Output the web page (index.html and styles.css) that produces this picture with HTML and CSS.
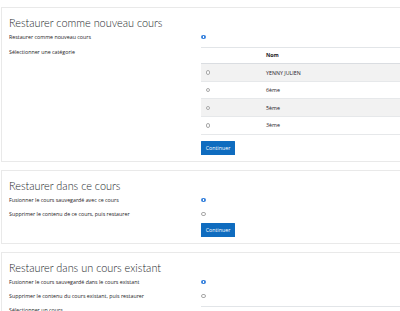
FILE: index.html
```html
<!DOCTYPE html>
<html lang="fr">
<head>
<meta charset="utf-8">
<title>Restauration</title>
<link rel="stylesheet" href="styles.css">
</head>
<body>
<div class="page">
  <section class="card">
    <h2 class="title">Restaurer comme nouveau cours</h2>
    <div class="row">
      <span class="label">Restaurer comme nouveau cours</span>
      <span class="ctrl"><span class="radio checked"></span></span>
    </div>
    <div class="row row-table">
      <span class="label label-tab">Sélectionner une catégorie</span>
      <div class="ctrl">
        <div class="table">
          <div class="tr th"><span class="c1"></span><span class="c2">Nom</span></div>
          <div class="tr odd"><span class="c1"><span class="radio"></span></span><span class="c2">YENNY JULIEN</span></div>
          <div class="tr"><span class="c1"><span class="radio"></span></span><span class="c2">6ème</span></div>
          <div class="tr odd"><span class="c1"><span class="radio"></span></span><span class="c2">5ème</span></div>
          <div class="tr"><span class="c1"><span class="radio"></span></span><span class="c2">3ème</span></div>
        </div>
      </div>
    </div>
    <div class="row row-btn">
      <span class="label"></span>
      <span class="ctrl"><button class="btn">Continuer</button></span>
    </div>
  </section>

  <section class="card">
    <h2 class="title">Restaurer dans ce cours</h2>
    <div class="row">
      <span class="label">Fusionner le cours sauvegardé avec ce cours</span>
      <span class="ctrl"><span class="radio checked"></span></span>
    </div>
    <div class="row">
      <span class="label">Supprimer le contenu de ce cours, puis restaurer</span>
      <span class="ctrl"><span class="radio"></span></span>
    </div>
    <div class="row row-btn2">
      <span class="label"></span>
      <span class="ctrl"><button class="btn">Continuer</button></span>
    </div>
  </section>

  <section class="card">
    <h2 class="title">Restaurer dans un cours existant</h2>
    <div class="row">
      <span class="label">Fusionner le cours sauvegardé dans le cours existant</span>
      <span class="ctrl"><span class="radio checked"></span></span>
    </div>
    <div class="row">
      <span class="label">Supprimer le contenu du cours existant, puis restaurer</span>
      <span class="ctrl"><span class="radio"></span></span>
    </div>
    <div class="row">
      <span class="label">Sélectionner un cours</span>
      <span class="ctrl ctrl-line"></span>
    </div>
  </section>
</div>
</body>
</html>
```

FILE: styles.css
```css
html, body {
  margin: 0;
  padding: 0;
  overflow: hidden;
  background: #ffffff;
}
body {
  font-family: "Open Sans", "Liberation Sans", sans-serif;
  color: #1d2125;
  font-size: 5.3px;
}
.page {
  padding: 7px 0 0 1px;
  width: 430px;
}
.card {
  border: 1px solid #e9e9e9;
  padding: 7px 6px 6px 7px;
  margin-bottom: 8px;
}
.title {
  margin: 0 0 1px 0;
  font-family: "Lato", "Noto Sans", sans-serif;
  font-size: 10.9px;
  line-height: 16px;
  font-weight: 300;
  color: #24272b;
}
.row {
  display: grid;
  grid-template-columns: 192px 1fr;
  margin-bottom: 4px;
}
.row:last-child { margin-bottom: 0; }
.label {
  line-height: 10px;
  height: 10px;
}
.label-tab { padding-top: 1px; }
.ctrl {
  display: flex;
  align-items: center;
  min-height: 10px;
}
.row-table { margin-bottom: 0; }
.row-table .ctrl { display: block; padding-top: 0.7px; }
.row-btn { margin-top: 6.5px; }
.radio {
  display: inline-block;
  box-sizing: border-box;
  width: 4.4px;
  height: 4.4px;
  border-radius: 50%;
  border: 0.7px solid #a8a8a8;
  background: #fff;
  margin-left: 0.3px;
}
.radio.checked {
  border: 0;
  background: radial-gradient(circle, #ffffff 0 0.8px, #3a83dd 1px);
}
.table {
  border-top: 0.5px solid #e2e5e8;
  width: 210px;
}
.tr {
  display: flex;
  align-items: center;
  box-sizing: border-box;
  height: 17.6px;
  border-bottom: 0.4px solid #e6e8ea;
}
.tr.th {
  height: 16.6px;
  font-weight: 700;
  border-bottom: 0.8px solid #dadde1;
}
.tr.odd { background: #f2f2f2; }
.c1 {
  width: 65px;
  display: flex;
  align-items: center;
  padding-left: 4.5px;
  box-sizing: border-box;
}
.c2 { flex: 1; }
.btn {
  font-family: inherit;
  font-size: 5.3px;
  color: #ffffff;
  background: #0f6cbf;
  border: 0;
  border-radius: 0.5px;
  height: 14px;
  width: 34px;
  padding: 0;
  line-height: 14px;
}
.ctrl-line {
  border-top: 0.5px solid #e2e5e8;
  align-self: start;
  margin-top: 1px;
}
```
